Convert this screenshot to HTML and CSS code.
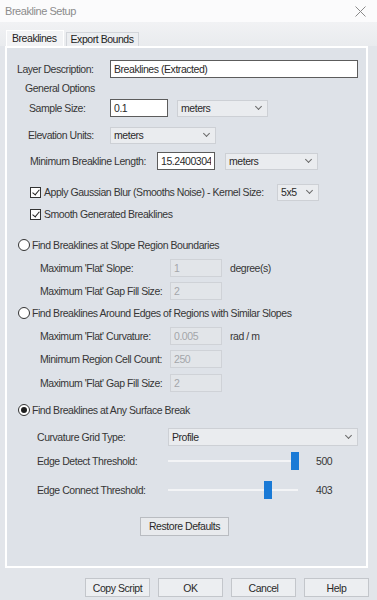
FILE: index.html
```html
<!DOCTYPE html>
<html lang="en">

<head>
    <meta charset="UTF-8">
    <meta name="viewport" content="width=device-width, initial-scale=1.0">
    <title>Breakline Setup</title>
    <link rel="stylesheet" href="styles.css">
</head>

<body>
    <div class="window">
        <div class="titlebar">
            <span class="title">Breakline Setup</span>
            <svg class="close" width="11" height="11" viewBox="0 0 11 11">
                <path d="M0.5 0.5 L10.5 10.5 M10.5 0.5 L0.5 10.5" stroke="#8a8a8a" stroke-width="1" fill="none" />
            </svg>
        </div>

        <div class="tabs">
            <div class="tab active">Breaklines</div>
            <div class="tab">Export Bounds</div>
        </div>

        <div class="panel">
            <div class="row r-desc">
                <span class="lbl w-desc">Layer Description:</span>
                <input class="text t-desc" type="text" value="Breaklines (Extracted)">
            </div>
            <div class="row r-head">General Options</div>
            <div class="row r-sample">
                <span class="lbl w-sample">Sample Size:</span>
                <input class="text t-sample" type="text" value="0.1">
                <div class="select s-sample">meters<i class="chev"></i></div>
            </div>
            <div class="row r-elev">
                <span class="lbl w-elev">Elevation Units:</span>
                <div class="select s-elev">meters<i class="chev"></i></div>
            </div>
            <div class="row r-min">
                <span class="lbl w-min">Minimum Breakline Length:</span>
                <input class="text t-min" type="text" value="15.24003048">
                <div class="select s-min">meters<i class="chev"></i></div>
            </div>
            <div class="row r-blur">
                <span class="check on"></span>
                <span class="lbl w-blur">Apply Gaussian Blur (Smooths Noise) - Kernel Size:</span>
                <div class="select s-kernel">5x5<i class="chev"></i></div>
            </div>
            <div class="row r-smooth">
                <span class="check on"></span>
                <span class="lbl">Smooth Generated Breaklines</span>
            </div>

            <div class="row r-radio1">
                <span class="radio"></span>
                <span class="lbl">Find Breaklines at Slope Region Boundaries</span>
            </div>
            <div class="row r-sub">
                <span class="lbl w-sub">Maximum 'Flat' Slope:</span>
                <input class="text off t-sub" type="text" value="1" disabled>
                <span class="unit">degree(s)</span>
            </div>
            <div class="row r-sub">
                <span class="lbl w-sub">Maximum 'Flat' Gap Fill Size:</span>
                <input class="text off t-sub" type="text" value="2" disabled>
            </div>

            <div class="row r-radio2">
                <span class="radio"></span>
                <span class="lbl">Find Breaklines Around Edges of Regions with Similar Slopes</span>
            </div>
            <div class="row r-sub">
                <span class="lbl w-sub">Maximum 'Flat' Curvature:</span>
                <input class="text off t-sub" type="text" value="0.005" disabled>
                <span class="unit">rad / m</span>
            </div>
            <div class="row r-sub">
                <span class="lbl w-sub">Minimum Region Cell Count:</span>
                <input class="text off t-sub" type="text" value="250" disabled>
            </div>
            <div class="row r-sub r-gap2">
                <span class="lbl w-sub">Maximum 'Flat' Gap Fill Size:</span>
                <input class="text off t-sub" type="text" value="2" disabled>
            </div>

            <div class="row r-radio3">
                <span class="radio on"></span>
                <span class="lbl">Find Breaklines at Any Surface Break</span>
            </div>
            <div class="row r-grid">
                <span class="lbl w-grid">Curvature Grid Type:</span>
                <div class="select s-grid">Profile<i class="chev"></i></div>
            </div>
            <div class="row r-detect">
                <span class="lbl w-grid">Edge Detect Threshold:</span>
                <div class="slider">
                    <div class="track"></div>
                    <div class="thumb" style="left: 123px"></div>
                </div>
                <span class="value">500</span>
            </div>
            <div class="row r-connect">
                <span class="lbl w-grid">Edge Connect Threshold:</span>
                <div class="slider">
                    <div class="track"></div>
                    <div class="thumb" style="left: 96px"></div>
                </div>
                <span class="value">403</span>
            </div>

            <div class="row r-restore">
                <button class="btn restore">Restore Defaults</button>
            </div>
        </div>

        <div class="buttons">
            <button class="btn">Copy Script</button>
            <button class="btn">OK</button>
            <button class="btn">Cancel</button>
            <button class="btn">Help</button>
        </div>
    </div>
</body>

</html>
```

FILE: styles.css
```css
* {
    margin: 0px;
    padding: 0px;
    box-sizing: border-box;
}

body {
    font-family: "Liberation Sans", Arial, sans-serif;
    font-size: 10.5px;
    letter-spacing: -0.45px;
    color: #363636;
    background-color: #e3e6eb;
}

.window {
    width: 377px;
    height: 600px;
    overflow: hidden;
    background-color: #e2e5ea;
}

.titlebar {
    display: flex;
    justify-content: space-between;
    align-items: center;
    height: 22px;
    padding: 0 11px 0 5px;
    background-color: #fbfbfc;
}

.title {
    font-size: 11px;
    color: #8c8c8c;
}

/* tabs */

.tabs {
    display: flex;
    align-items: flex-end;
    height: 24px;
    padding-left: 6px;
    background: linear-gradient(#f1f2f4, #e9ebee);
}

.tab {
    height: 14px;
    padding: 0 4px;
    line-height: 13px;
    border: 1px solid #d2d5da;
    border-bottom: none;
    background-color: #eceef1;
    color: #222;
}

.tab.active {
    height: 16px;
    padding: 0 6px 0 5px;
    line-height: 15px;
    background-color: #f2f3f5;
    border-color: #ffffff;
    margin-right: 2px;
}

/* main panel */

.panel {
    height: 522px;
    margin: 0 9px 0 5px;
    padding-top: 12px;
    border: 2px solid #ffffff;
    background-color: #dee2e8;
}

.row {
    display: flex;
    align-items: center;
    height: 18px;
    white-space: nowrap;
}

.lbl {
    flex-shrink: 0;
}

.r-desc { padding-left: 10px; }
.w-desc { width: 93px; }

.r-head { margin-top: 1px; padding-left: 18px; }

.r-sample { margin-top: 2px; padding-left: 22px; }
.w-sample { width: 81px; }

.r-elev { margin-top: 9px; padding-left: 21px; }
.w-elev { width: 82px; }

.r-min { margin-top: 8px; padding-left: 23px; }
.w-min { width: 127px; }

.r-blur { margin-top: 13px; padding-left: 23px; }
.w-blur { width: 233px; }

.r-smooth { margin-top: 4px; padding-left: 23px; }

.r-radio1 { margin-top: 13px; padding-left: 11px; }
.r-radio2 { margin-top: 4px; padding-left: 11px; }
.r-radio3 { margin-top: 9px; padding-left: 11px; }

.r-sub { margin-top: 5px; padding-left: 33px; }
.r-gap2 { margin-top: 6px; }
.w-sub { width: 130px; }

.r-grid { margin-top: 9px; padding-left: 30px; }
.w-grid { width: 131px; }

.r-detect { margin-top: 6px; padding-left: 30px; }
.r-connect { margin-top: 11px; padding-left: 30px; }

.r-restore {
    justify-content: center;
    margin-top: 18px;
    padding-right: 4px;
}

/* inputs */

.text {
    height: 18px;
    padding: 0 3px;
    border: 1px solid #5c5c5c;
    background-color: #ffffff;
    font: inherit;
    letter-spacing: inherit;
    color: #2a2a2a;
    outline: none;
}

.t-desc { width: 248px; }
.t-sample { width: 58px; }
.t-min { width: 58px; }

.text.off {
    border-color: #cfd2d7;
    background-color: #e2e5e9;
    color: #a4a6aa;
}

.t-sub { width: 52px; }

.unit {
    margin-left: 8px;
}

.select {
    display: flex;
    align-items: center;
    justify-content: space-between;
    height: 17px;
    padding: 0 6px 0 3px;
    border: 1px solid #cdd0d5;
    background-color: #eaecef;
    color: #2a2a2a;
}

.s-sample { width: 91px; margin-left: 9px; }
.s-elev { width: 106px; }
.s-min { width: 93px; margin-left: 10px; }
.s-kernel { width: 42px; }
.s-grid { width: 190px; height: 18px; }

.chev {
    width: 5px;
    height: 5px;
    margin-top: -3px;
    border-right: 1px solid #6a6a6a;
    border-bottom: 1px solid #6a6a6a;
    transform: rotate(45deg);
}

/* check + radio */

.check,
.radio {
    position: relative;
    flex-shrink: 0;
    width: 11px;
    height: 11px;
    margin-right: 3px;
    border: 1px solid #333333;
    background-color: #ffffff;
}

.check.on::after {
    content: "";
    position: absolute;
    left: 3px;
    top: 0px;
    width: 3px;
    height: 6px;
    border-right: 1px solid #222;
    border-bottom: 1px solid #222;
    transform: rotate(40deg);
}

.radio {
    width: 12px;
    height: 12px;
    margin-right: 2px;
    border-radius: 50%;
}

.radio.on::after {
    content: "";
    position: absolute;
    left: 2px;
    top: 2px;
    width: 6px;
    height: 6px;
    border-radius: 50%;
    background-color: #1e1e1e;
}

/* sliders */

.slider {
    position: relative;
    width: 130px;
    height: 18px;
}

.track {
    position: absolute;
    left: 0;
    right: 0;
    top: 8px;
    height: 2px;
    background-color: #f3f4f6;
}

.thumb {
    position: absolute;
    top: 0;
    width: 8px;
    height: 18px;
    background-color: #1a7ad6;
}

.value {
    margin-left: 18px;
}

/* buttons */

.btn {
    height: 19px;
    border: 1px solid #c3c6cb;
    background-color: #eceef1;
    font: inherit;
    letter-spacing: inherit;
    color: #2a2a2a;
}

.restore {
    width: 89px;
    background-color: #e8eaed;
    border-color: #b9bcc1;
}

.buttons {
    display: flex;
    justify-content: flex-end;
    gap: 8px;
    margin-top: 10px;
    padding-right: 8px;
}

.buttons .btn {
    width: 65px;
}
```
